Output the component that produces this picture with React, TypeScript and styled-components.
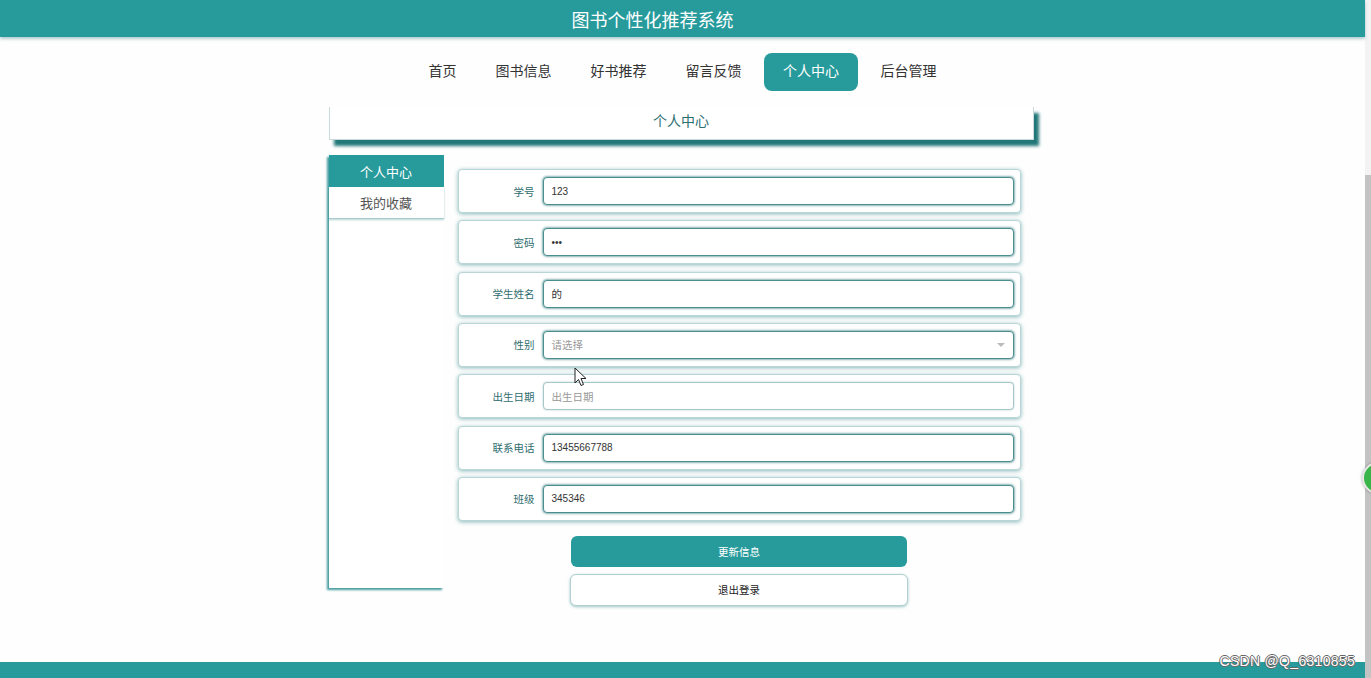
import React from "react";
import styled, { createGlobalStyle } from "styled-components";

const TEAL = "#279b9c";

const GlobalStyle = createGlobalStyle`
  html, body {
    margin: 0;
    padding: 0;
    overflow: hidden;
    background: #ffffff;
    font-family: "Noto Sans CJK SC", "Noto Sans", sans-serif;
  }
  * { box-sizing: border-box; }
`;

const Frame = styled.div`
  display: flex;
  height: 678px;
  width: 1371px;
  position: relative;
  overflow: hidden;
`;

const Page = styled.div`
  flex: 1;
  display: flex;
  flex-direction: column;
  background: #fefefe;
`;

const Header = styled.header`
  height: 37px;
  background: ${TEAL};
  display: flex;
  align-items: center;
  justify-content: center;
  padding-right: 60px;
  box-shadow: 0 2px 3px rgba(40, 110, 120, 0.35);
  position: relative;
  z-index: 2;
`;

const Title = styled.h1`
  margin: 0;
  color: #fff;
  font-size: 18px;
  font-weight: 400;
  letter-spacing: 0;
`;

const Nav = styled.nav`
  display: flex;
  justify-content: center;
  margin-top: 16px;
  height: 38px;
`;

const NavItem = styled.a<{ $active?: boolean }>`
  display: flex;
  align-items: center;
  padding: 0 ${(p) => (p.$active ? "19px" : "19.5px")} 4px;
  margin: 0 ${(p) => (p.$active ? "3px" : "0")};
  font-size: 14px;
  color: ${(p) => (p.$active ? "#fff" : "#333")};
  background: ${(p) => (p.$active ? TEAL : "transparent")};
  border-radius: 8px;
  cursor: pointer;
`;

const Main = styled.main`
  width: 708px;
  margin: 16px auto 0;
`;

const TitleBox = styled.div`
  height: 33px;
  background: #fff;
  border: 1px solid #c9dadb;
  border-top: none;
  display: flex;
  align-items: center;
  justify-content: center;
  padding-bottom: 6px;
  font-size: 14px;
  color: #2d6f71;
  width: 705px;
  margin-left: 0;
  box-shadow: 5px 6px 3px rgba(22, 112, 114, 0.95);
`;

const Body = styled.div`
  display: flex;
  margin-top: 15px;
`;

const Side = styled.aside`
  width: 115px;
  height: 433px;
  background: #fff;
  box-shadow: -2px 2px 2px rgba(38, 140, 142, 0.85);
  display: flex;
  flex-direction: column;
`;

const SideItem = styled.div<{ $active?: boolean }>`
  height: 32px;
  display: flex;
  align-items: center;
  justify-content: center;
  font-size: 13px;
  color: ${(p) => (p.$active ? "#fff" : "#555")};
  background: ${(p) => (p.$active ? TEAL : "#fff")};
  border-bottom: ${(p) => (p.$active ? "none" : "1px solid #a9c9ca")};
  box-shadow: ${(p) => (p.$active ? "none" : "0 1px 2px rgba(40,130,132,0.35)")};
`;

const FormCol = styled.div`
  margin-left: 14px;
  width: 563px;
  padding-top: 14px;
  display: flex;
  flex-direction: column;
  align-items: center;
`;

const Rows = styled.div`
  width: 100%;
  display: flex;
  flex-direction: column;
  gap: 7.33px;
`;

const Row = styled.div`
  height: 44px;
  background: #fff;
  border: 1px solid #b9d6d7;
  border-radius: 4px;
  box-shadow: 0 1px 4px rgba(38, 128, 130, 0.55);
  display: grid;
  grid-template-columns: 84px 1fr;
  align-items: center;
  padding-right: 6px;
`;

const Label = styled.label`
  text-align: right;
  padding-right: 8px;
  font-size: 10.5px;
  color: #2f6d6f;
`;

const Field = styled.div<{ $soft?: boolean }>`
  height: 28px;
  border-radius: 4px;
  border: 1px solid ${(p) => (p.$soft ? "#a6c6c7" : "#4a8e90")};
  box-shadow: ${(p) =>
    p.$soft ? "0 0 2px rgba(80,140,142,0.45)" : "0 0 2px 1px rgba(50,120,122,0.55)"};
  background: #fff;
  display: flex;
  align-items: center;
  padding: 0 8px;
  font-size: 10px;
  font-family: "Liberation Sans", "Noto Sans CJK SC", sans-serif;
  color: #333;
`;

const Digits = styled.span`
  flex: 1;
`;

const FieldText = styled.span<{ $muted?: boolean }>`
  flex: 1;
  font-size: 10.5px;
  color: ${(p) => (p.$muted ? "#999" : "#333")};
  font-family: "Noto Sans CJK SC", "Liberation Sans", sans-serif;
`;

const Caret = styled.span`
  width: 0;
  height: 0;
  border-left: 4px solid transparent;
  border-right: 4px solid transparent;
  border-top: 4px solid #bbb;
`;

const Button = styled.button<{ $primary?: boolean }>`
  display: flex;
  align-items: center;
  justify-content: center;
  width: ${(p) => (p.$primary ? "336px" : "338px")};
  height: ${(p) => (p.$primary ? "31px" : "32px")};
  margin-top: ${(p) => (p.$primary ? "15px" : "7px")};
  border-radius: 6px;
  border: ${(p) => (p.$primary ? "none" : "1px solid #b2d0d1")};
  background: ${(p) => (p.$primary ? TEAL : "#fff")};
  color: ${(p) => (p.$primary ? "#fff" : "#222")};
  box-shadow: ${(p) => (p.$primary ? "none" : "0 1px 3px rgba(40,130,132,0.45)")};
  font-size: 10.5px;
  font-family: "Noto Sans CJK SC", sans-serif;
  cursor: pointer;
`;

const Spacer = styled.div`
  flex: 1;
`;

const Footer = styled.footer`
  height: 16px;
  background: ${TEAL};
`;

const ScrollBar = styled.div`
  width: 6px;
  display: flex;
  flex-direction: column;
  background: #f1f1f1;
`;

const ScrollTrack = styled.div`
  height: 175px;
  background: #f3f3f4;
`;

const ScrollThumb = styled.div`
  flex: 1;
  background: #c3c3c3;
`;

const Watermark = styled.div`
  position: absolute;
  right: 16px;
  bottom: 9px;
  font-family: "Liberation Sans", sans-serif;
  font-size: 14px;
  letter-spacing: 0.3px;
  color: #fff;
  text-shadow: 1px 0 0 #666, -1px 0 0 #666, 0 1px 0 #666, 0 -1px 0 #666;
  z-index: 5;
`;

const FloatBall = styled.div`
  position: absolute;
  left: 1362px;
  top: 462px;
  width: 32px;
  height: 32px;
  border-radius: 50%;
  background: #3ab54a;
  border: 2px solid #e8e8e8;
  box-shadow: 0 0 3px rgba(0, 0, 0, 0.35);
  z-index: 6;
`;

const Cursor = styled.svg`
  position: absolute;
  left: 574px;
  top: 367px;
  z-index: 7;
`;

type FieldDef = { label: string; value: string; placeholder?: boolean; select?: boolean; soft?: boolean };

const fields: FieldDef[] = [
  { label: "学号", value: "123" },
  { label: "密码", value: "•••" },
  { label: "学生姓名", value: "的" },
  { label: "性别", value: "请选择", placeholder: true, select: true },
  { label: "出生日期", value: "出生日期", placeholder: true, soft: true },
  { label: "联系电话", value: "13455667788" },
  { label: "班级", value: "345346" },
];

const navItems = ["首页", "图书信息", "好书推荐", "留言反馈", "个人中心", "后台管理"];

export default function App() {
  return (
    <>
      <GlobalStyle />
      <Frame>
        <Page>
          <Header>
            <Title>图书个性化推荐系统</Title>
          </Header>
          <Nav>
            {navItems.map((n) => (
              <NavItem key={n} $active={n === "个人中心"}>
                {n}
              </NavItem>
            ))}
          </Nav>
          <Main>
            <TitleBox>个人中心</TitleBox>
            <Body>
              <Side>
                <SideItem $active>个人中心</SideItem>
                <SideItem>我的收藏</SideItem>
              </Side>
              <FormCol>
                <Rows>
                  {fields.map((f) => (
                    <Row key={f.label}>
                      <Label>{f.label}</Label>
                      <Field $soft={f.soft}>
                        {/^[0-9•]+$/.test(f.value) ? (
                          <Digits>{f.value}</Digits>
                        ) : (
                          <FieldText $muted={f.placeholder}>{f.value}</FieldText>
                        )}
                        {f.select && <Caret />}
                      </Field>
                    </Row>
                  ))}
                </Rows>
                <Button $primary>更新信息</Button>
                <Button>退出登录</Button>
              </FormCol>
            </Body>
          </Main>
          <Spacer />
          <Footer />
        </Page>
        <ScrollBar>
          <ScrollTrack />
          <ScrollThumb />
        </ScrollBar>
        <Watermark>CSDN @Q_6310855</Watermark>
        <FloatBall />
        <Cursor width="14" height="20" viewBox="0 0 14 20">
          <path d="M1 1 L1 16 L4.5 12.5 L7 18.5 L9.5 17.5 L7 11.5 L12 11.5 Z" fill="#fff" stroke="#222" strokeWidth="1" strokeLinejoin="round" />
        </Cursor>
      </Frame>
    </>
  );
}
